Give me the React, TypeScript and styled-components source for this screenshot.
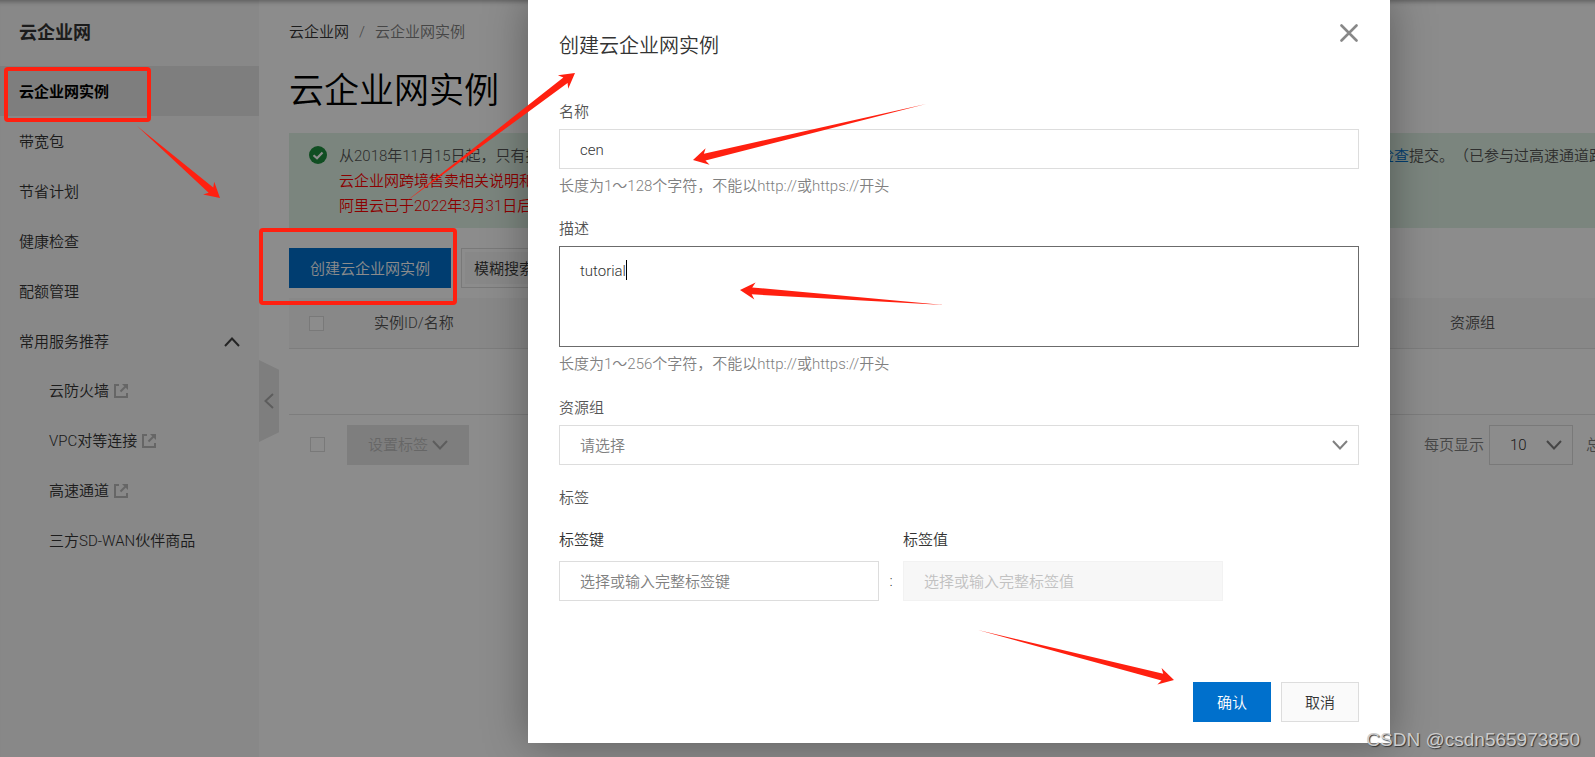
import React from "react";
import styled, { createGlobalStyle } from "styled-components";

const Global = createGlobalStyle`
  * { box-sizing: border-box; }
  html, body { margin: 0; height: 100%; }
  body {
    background: #fff;
    color: #333;
    font-family: Roboto, "Noto Sans CJK SC", sans-serif;
    font-size: 15px;
    font-weight: 350;
    line-height: 24px;
    text-spacing-trim: space-all;
    overflow: hidden;
  }
  #root { height: 100%; }
  button, input, textarea, select { font: inherit; color: inherit; margin: 0; border-radius: 0; }
  a { color: inherit; text-decoration: none; }
`;

const Page = styled.div`
  position: relative;
  display: flex;
  min-height: 100vh;
  overflow: hidden;
  white-space: nowrap;
`;

const Sidebar = styled.nav`
  flex: 0 0 259px;
  background: #f7f7f7;
`;

const SideTitle = styled.h2`
  margin: 0;
  height: 66px;
  padding: 0 19px;
  font-size: 18px;
  font-weight: 700;
  line-height: 66px;
`;

const SideItem = styled.a<{ $active?: boolean; $nested?: boolean }>`
  display: flex;
  align-items: center;
  gap: 5px;
  height: 50px;
  padding: ${(p) => (p.$nested ? "0 19px 0 49px" : "2px 19px 0")};
  background: ${(p) => (p.$active ? "#e6e6e6" : "transparent")};
  color: ${(p) => (p.$active ? "#000" : "#333")};
  font-weight: ${(p) => (p.$active ? 700 : 350)};
`;

const SideGroup = styled.button`
  display: flex;
  align-items: center;
  justify-content: space-between;
  width: 100%;
  height: 50px;
  padding: 2px 19px 0;
  border: 0;
  background: none;
`;

const Handle = styled.button`
  align-self: flex-start;
  display: grid;
  place-items: center;
  flex: 0 0 20px;
  height: 82px;
  margin-top: 360px;
  padding: 0;
  border: 0;
  background: #e6e6e6;
  clip-path: polygon(0 0, 100% 12%, 100% 88%, 0 100%);
`;

const Main = styled.main`
  flex: 1;
  min-width: 0;
  padding: 0 0 0 10px;
`;

const Breadcrumb = styled.div`
  display: flex;
  gap: 10px;
  padding-top: 20px;
  color: #808080;
  a:first-child { color: #333; }
`;

const Heading = styled.h1`
  margin: 21px 0 15px;
  color: #000;
  font-size: 35px;
  font-weight: 350;
  line-height: 53px;
`;

const Notice = styled.section`
  display: flex;
  gap: 12px;
  padding: 11px 0 9px 20px;
  background: #e1f3e6;
  line-height: 25px;
  overflow: hidden;
  svg { flex: none; margin-top: 2px; }
`;

const NoticeLine = styled.div<{ $alert?: boolean }>`
  display: flex;
  color: ${(p) => (p.$alert ? "#f00" : "#555")};
  a { color: #0070cc; }
`;

const NoticeLead = styled.span`
  flex: 0 0 1010px;
`;

const Toolbar = styled.div`
  display: flex;
  gap: 10px;
  padding: 20px 0 10px;
`;

const Button = styled.button<{ $kind: "primary" | "normal" | "disabled" }>`
  height: 40px;
  padding: 1px 20px 0;
  border: 1px solid ${(p) => ({ primary: "#0070cc", normal: "#ddd", disabled: "#e6e6e6" })[p.$kind]};
  background: ${(p) => ({ primary: "#0070cc", normal: "#fafafa", disabled: "#e6e6e6" })[p.$kind]};
  color: ${(p) => ({ primary: "#fff", normal: "#333", disabled: "#bbb" })[p.$kind]};
  display: flex;
  align-items: center;
  justify-content: center;
  gap: 4px;
`;

const SearchKind = styled.select`
  appearance: none;
  width: 140px;
  height: 40px;
  padding: 1px 12px 0;
  border: 1px solid #ddd;
  background: #f7f7f7;
  box-shadow: inset 0 0 0 3px #fff;
`;

const Table = styled.table`
  width: 100%;
  border-collapse: collapse;
  table-layout: fixed;
  tr { border-bottom: 1px solid #e3e3e3; }
  th { height: 50px; padding: 1px 0 0; background: #f7f7f7; color: #555; font-weight: 350; text-align: left; }
  th:first-child { width: 85px; padding-left: 20px; }
  th:last-child { width: 145px; }
  td { height: 66px; }
`;

const Check = styled.input.attrs({ type: "checkbox" })`
  appearance: none;
  display: block;
  width: 15px;
  height: 15px;
  margin: 0;
  border: 1px solid #ddd;
  background: #fff;
`;

const TableFoot = styled.div`
  display: flex;
  align-items: center;
  padding: 10px 0 0 21px;
`;

const FootGap = styled.div`
  flex: 0 0 22px;
`;

const Pager = styled.div`
  display: flex;
  flex: 0 0 171px;
  align-items: center;
  gap: 5px;
  margin-left: auto;
  color: #808080;
  overflow: hidden;
`;

const SelectWrap = styled.div<{ $small?: boolean }>`
  display: grid;
  flex: 0 0 auto;
  width: ${(p) => (p.$small ? "84px" : "100%")};
  margin-right: ${(p) => (p.$small ? "8px" : 0)};
  align-items: center;
  select, svg { grid-area: 1 / 1; }
  svg { justify-self: end; margin-right: 11px; pointer-events: none; }
`;

const Select = styled.select<{ $muted?: boolean }>`
  appearance: none;
  width: 100%;
  height: 40px;
  padding: 1px 20px 0;
  border: 1px solid #ddd;
  background: #fff;
  color: ${(p) => (p.$muted ? "#808080" : "#333")};
`;

const Mask = styled.div`
  position: absolute;
  inset: 0;
  display: flex;
  justify-content: flex-end;
  align-items: flex-start;
  padding-right: 205px;
  background: rgba(0, 0, 0, 0.45);
  box-shadow: inset 0 6px 4px -4px rgba(0, 0, 0, 0.3);
`;

const Dialog = styled.form`
  width: 862px;
  padding: 20px 31px 21px;
  background: #fff;
  box-shadow: 0 0 40px rgba(0, 0, 0, 0.35);
`;

const DialogHead = styled.header`
  display: flex;
  justify-content: space-between;
  align-items: flex-start;
  margin-bottom: 38px;
`;

const DialogTitle = styled.h2`
  margin: 11px 0 0;
  font-size: 20px;
  font-weight: 350;
  line-height: 30px;
`;

const CloseButton = styled.button`
  display: grid;
  place-items: center;
  width: 20px;
  height: 26px;
  padding: 0;
  border: 0;
  background: none;
`;

const Field = styled.div<{ $gap?: number }>`
  display: flex;
  flex-direction: column;
  margin-bottom: ${(p) => p.$gap ?? 18}px;
`;

const Label = styled.label<{ $strong?: boolean }>`
  height: ${(p) => (p.$strong ? 34 : 30)}px;
  padding-top: 1px;
  color: ${(p) => (p.$strong ? "#333" : "#555")};
`;

const Legend = styled.div`
  margin-bottom: 17px;
  padding-top: 1px;
  color: #555;
`;

const TextInput = styled.input`
  width: 100%;
  height: 40px;
  padding: 1px 20px 0;
  border: 1px solid #ddd;
  background: #fff;
  &::placeholder { color: #808080; opacity: 1; }
  &:disabled { border-color: #f2f2f2; background: #f7f7f7; }
  &:disabled::placeholder { color: #c1c1c1; }
`;

const EditorWrap = styled.div`
  display: grid;
`;

const Editor = styled.textarea`
  grid-area: 1 / 1;
  display: block;
  width: 100%;
  height: 101px;
  padding: 12px 20px;
  border: 1px solid #6b6b6b;
  outline: none;
  resize: none;
`;

const CaretLine = styled.div`
  grid-area: 1 / 1;
  display: flex;
  align-items: center;
  height: 24px;
  margin: 12px 21px;
  pointer-events: none;
  color: transparent;
  &::after { content: ""; width: 1px; height: 20px; background: #000; }
`;

const Hint = styled.p`
  margin: 5px 0 0;
  color: #808080;
`;

const TagRow = styled.div`
  display: flex;
  align-items: flex-end;
  margin-bottom: 81px;
`;

const TagField = styled.div`
  display: flex;
  flex-direction: column;
  width: 320px;
`;

const Colon = styled.span`
  width: 24px;
  line-height: 40px;
  text-align: center;
`;

const Actions = styled.footer`
  display: flex;
  justify-content: flex-end;
  gap: 10px;
  button { padding: 1px 23px 0; }
`;

const Annotations = styled.svg`
  position: absolute;
  left: 0;
  top: 0;
  width: 1200px;
  height: 700px;
  pointer-events: none;
`;

const Watermark = styled.div`
  position: absolute;
  right: 15px;
  bottom: 5px;
  color: #ccc;
  font-family: "Liberation Sans", sans-serif;
  font-size: 19px;
  font-weight: 400;
  text-shadow: 1px 1px 1px #333;
`;

const Chevron = ({ rotate = 0, color = "#666" }: { rotate?: number; color?: string }) => (
  <svg width="16" height="16" viewBox="0 0 16 16" fill="none" stroke={color} strokeWidth="2" aria-hidden="true">
    <path d="M1 4 L8 11.5 L15 4" transform={`rotate(${rotate} 8 8)`} />
  </svg>
);

const External = () => (
  <svg width="14" height="14" viewBox="0 0 14 14" fill="none" stroke="#bbb" strokeWidth="2" aria-hidden="true">
    <path d="M5 1H1V13H13V9M11.500 2.500L6.500 7.500" />
    <path d="M8 0H14V6Z" fill="#bbb" stroke="none" />
  </svg>
);

const Arrow = ({ from, to }: { from: [number, number]; to: [number, number] }) => {
  const dx = to[0] - from[0];
  const dy = to[1] - from[1];
  const length = Math.hypot(dx, dy);
  const angle = (Math.atan2(dy, dx) * 180) / Math.PI;
  return (
    <polygon
      fill="#ff2010"
      transform={`translate(${to[0]} ${to[1]}) rotate(${angle})`}
      points={`0,0 -15,-8.500 -12,-3.500 ${-length},0 -12,3.500 -15,8.500`}
    />
  );
};

const links = [
  { text: "云防火墙", external: true },
  { text: "VPC对等连接", external: true },
  { text: "高速通道", external: true },
  { text: "三方SD-WAN伙伴商品", external: false },
];

export default function App() {
  return (
    <>
      <Global />
      <Page>
        <Sidebar>
          <SideTitle>云企业网</SideTitle>
          <SideItem href="#" $active>云企业网实例</SideItem>
          {["带宽包", "节省计划", "健康检查", "配额管理"].map((t) => (
            <SideItem href="#" key={t}>{t}</SideItem>
          ))}
          <SideGroup type="button">
            常用服务推荐
            <Chevron rotate={180} color="#444" />
          </SideGroup>
          {links.map((l) => (
            <SideItem href="#" key={l.text} $nested>
              {l.text}
              {l.external && <External />}
            </SideItem>
          ))}
        </Sidebar>
        <Handle type="button" aria-label="收起">
          <Chevron rotate={90} color="#aaa" />
        </Handle>
        <Main>
          <Breadcrumb>
            <a href="#">云企业网</a>
            <span>/</span>
            <a href="#">云企业网实例</a>
          </Breadcrumb>
          <Heading>云企业网实例</Heading>
          <Notice>
            <svg width="18" height="18" viewBox="0 0 18 18" aria-hidden="true">
              <circle cx="9" cy="9" r="9" fill="#1e8e3e" />
              <path d="M4.500 9.200L8 12.300L13.500 6.500" fill="none" stroke="#fff" strokeWidth="2.200" />
            </svg>
            <div>
              <NoticeLine>
                <NoticeLead>从2018年11月15日起，只有提交</NoticeLead>
                <a href="#">健康检查</a>提交。（已参与过高速通道路由
              </NoticeLine>
              <NoticeLine $alert>云企业网跨境售卖相关说明和</NoticeLine>
              <NoticeLine $alert>阿里云已于2022年3月31日后</NoticeLine>
            </div>
          </Notice>
          <Toolbar>
            <Button type="button" $kind="primary">创建云企业网实例</Button>
            <SearchKind aria-label="搜索方式">
              <option>模糊搜索</option>
            </SearchKind>
          </Toolbar>
          <Table>
            <thead>
              <tr>
                <th><Check aria-label="全选" /></th>
                <th>实例ID/名称</th>
                <th>资源组</th>
              </tr>
            </thead>
            <tbody>
              <tr><td colSpan={3} /></tr>
            </tbody>
          </Table>
          <TableFoot>
            <Check aria-label="选择本页" />
            <FootGap />
            <Button type="button" $kind="disabled">
              设置标签
              <Chevron color="#aaa" />
            </Button>
            <Pager>
              <label htmlFor="page-size">每页显示</label>
              <SelectWrap $small>
                <Select id="page-size"><option>10</option></Select>
                <Chevron color="#808080" />
              </SelectWrap>
              <span>总共</span>
            </Pager>
          </TableFoot>
        </Main>

        <Mask>
          <Dialog role="dialog" aria-labelledby="dialog-title" onSubmit={(e: React.FormEvent) => e.preventDefault()}>
            <DialogHead>
              <DialogTitle id="dialog-title">创建云企业网实例</DialogTitle>
              <CloseButton type="button" aria-label="关闭">
                <svg width="18" height="18" viewBox="0 0 18 18" stroke="#888" strokeWidth="2.600" strokeLinecap="round" aria-hidden="true">
                  <path d="M1.500 1.500L16.500 16.500M16.500 1.500L1.500 16.500" />
                </svg>
              </CloseButton>
            </DialogHead>
            <Field>
              <Label htmlFor="name">名称</Label>
              <TextInput id="name" defaultValue="cen" />
              <Hint>长度为1～128个字符，不能以http://或https://开头</Hint>
            </Field>
            <Field $gap={19}>
              <Label htmlFor="desc">描述</Label>
              <EditorWrap>
                <Editor id="desc" defaultValue="tutorial" />
                <CaretLine aria-hidden="true">tutorial</CaretLine>
              </EditorWrap>
              <Hint>长度为1～256个字符，不能以http://或https://开头</Hint>
            </Field>
            <Field $gap={20}>
              <Label htmlFor="group">资源组</Label>
              <SelectWrap>
                <Select id="group" $muted><option>请选择</option></Select>
                <Chevron color="#808080" />
              </SelectWrap>
            </Field>
            <Legend>标签</Legend>
            <TagRow>
              <TagField>
                <Label $strong htmlFor="tag-key">标签键</Label>
                <TextInput id="tag-key" placeholder="选择或输入完整标签键" />
              </TagField>
              <Colon>:</Colon>
              <TagField>
                <Label $strong htmlFor="tag-value">标签值</Label>
                <TextInput id="tag-value" placeholder="选择或输入完整标签值" disabled />
              </TagField>
            </TagRow>
            <Actions>
              <Button type="submit" $kind="primary">确认</Button>
              <Button type="button" $kind="normal">取消</Button>
            </Actions>
          </Dialog>
        </Mask>

        <Annotations aria-hidden="true">
          <g fill="none" stroke="#ff2010" strokeWidth="4">
            <rect x="6" y="69" width="143" height="51" rx="2" />
            <rect x="261" y="230" width="194" height="73" rx="2" />
          </g>
          <Arrow from={[137, 126]} to={[220, 198]} />
          <Arrow from={[404, 203]} to={[575, 73]} />
          <Arrow from={[926, 104]} to={[693, 160]} />
          <Arrow from={[944, 305]} to={[740, 290]} />
          <Arrow from={[978, 630]} to={[1174, 680]} />
        </Annotations>
        <Watermark>CSDN @csdn565973850</Watermark>
      </Page>
    </>
  );
}
